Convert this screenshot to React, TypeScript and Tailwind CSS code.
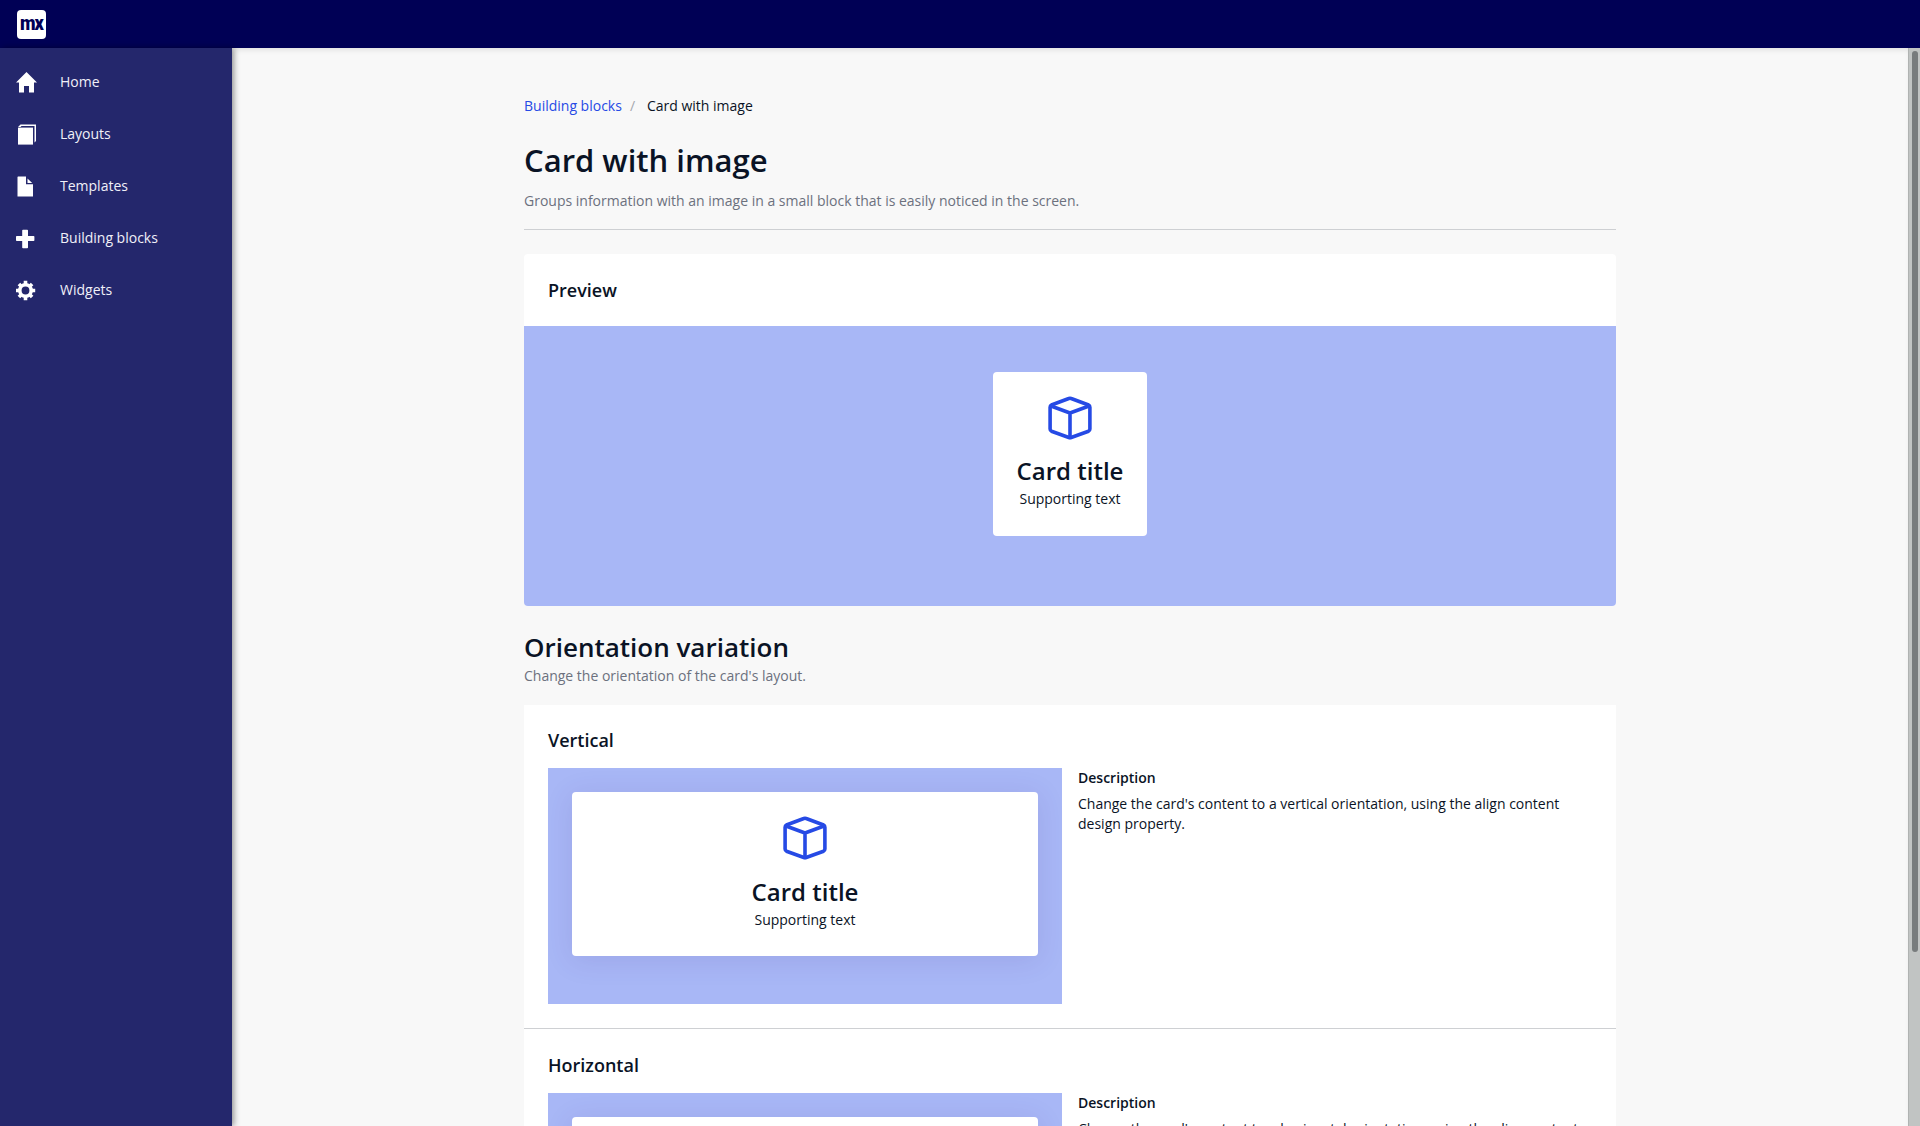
import type { ReactNode } from "react";

const navItems: { label: string; icon: ReactNode }[] = [
  {
    label: "Home",
    icon: (
      <svg viewBox="0 0 21 21" className="h-[21px] w-[21px]" fill="currentColor">
        <path d="M10.5 0 L21 10.4 H18 V20.6 H13 V14 H8 V20.6 H3 V10.4 H0 Z" />
      </svg>
    ),
  },
  {
    label: "Layouts",
    icon: (
      <svg viewBox="0 0 21 21" className="h-[21px] w-[21px]" fill="currentColor">
        <path d="M2 3.6 H17 V20.6 H2 Z" />
        <path d="M2 3 4.5 0.6 H20 V17 L18.5 18.5 V2 H5.5 L4.5 3 Z" />
      </svg>
    ),
  },
  {
    label: "Templates",
    icon: (
      <svg viewBox="0 0 21 21" className="h-[21px] w-[21px]" fill="currentColor">
        <path d="M2 0.5 H10 V8.2 H17 V20.5 H1.500 V1 Z" />
        <path d="M11.5 2.5 V7 H16.2 Z" />
      </svg>
    ),
  },
  {
    label: "Building blocks",
    icon: (
      <svg viewBox="0 0 21 21" className="h-[21px] w-[21px]" fill="currentColor">
        <path d="M7 1.8 h4.2 a.8.8 0 0 1 .8.8 V8 h5.6 a.8.8 0 0 1 .8.8 v3.4 a.8.8 0 0 1-.8.8 H12 v6.4 a.8.8 0 0 1-.8.8 H7 a.8.8 0 0 1-.8-.8 V13 H.8 a.8.8 0 0 1-.8-.8 V8.8 A.8.8 0 0 1 .8 8 H6.2 V2.6 a.8.8 0 0 1 .8-.8Z" />
      </svg>
    ),
  },
  {
    label: "Widgets",
    icon: (
      <svg viewBox="0 0 21 21" className="h-[21px] w-[21px]" fill="none" stroke="currentColor" strokeWidth="3.6">
        <circle cx="9.500" cy="10.500" r="5.700" />
        <path d="M9.500 0.800 V5 M9.500 16 V20.200 M-0.200 10.500 H4 M15 10.500 H19.200 M2.900 3.900 5.700 6.700 M13.300 14.300 16.100 17.100 M16.100 3.900 13.300 6.700 M5.700 14.300 2.900 17.100" />
      </svg>
    ),
  },
];

function DemoCard({ className = "", textClassName = "" }: { className?: string; textClassName?: string }) {
  return (
    <div className={`flex h-[164px] flex-col items-center rounded bg-white p-6 ${className}`}>
      <svg
        viewBox="0 0 48 48"
        className="-mt-0.5 h-12 w-12 shrink-0 text-[#264ae5]"
        fill="none"
        stroke="currentColor"
        strokeWidth="3.6"
        strokeLinejoin="round"
        strokeLinecap="round"
      >
        <path d="M22.800 4.500 Q24 4 25.200 4.500 L42.600 11 Q43.900 11.700 43.900 13.200 V35 Q43.900 36.500 42.500 37.200 L25.200 43.500 Q24 44 22.800 43.500 L5.500 37.200 Q4.100 36.500 4.100 35 V13.200 Q4.100 11.700 5.400 11 Z" />
        <path d="M5 12 24 19 43 12 M24 19 V43.500" />
      </svg>
      <div className={`flex flex-col items-center ${textClassName}`}>
        <div className="text-2xl leading-[31px] font-semibold">Card title</div>
        <div className="mt-[3px] text-sm leading-5">Supporting text</div>
      </div>
    </div>
  );
}

function Variation({ title, text, className }: { title: string; text: string; className: string }) {
  return (
    <section className={`border-b border-[#ced0d3] px-6 pb-6 ${className}`}>
      <h3 className="text-lg leading-[23px] font-semibold">{title}</h3>
      <div className="mt-4 flex gap-4">
        <div className="h-[236px] w-[514px] bg-[#a8b7f6] p-6">
          <DemoCard className="shadow-[0_4px_28px_1px_rgba(60,40,130,0.11)]" textClassName="mt-3.5" />
        </div>
        <div className="w-[514px] text-sm leading-5">
          <div className="pt-px leading-[18px] font-semibold">Description</div>
          <p className="mt-[7px]">{text}</p>
        </div>
      </div>
    </section>
  );
}

export default function App() {
  return (
    <div className="flex h-[1126px] w-[1920px] flex-col overflow-hidden bg-[#f8f8f8] font-['Open_Sans',sans-serif] text-[#0a1325]">
      <header className="flex h-12 shrink-0 items-center bg-[#000055] pl-[17px]">
        <div className="flex h-[29px] w-[29px] items-center justify-center rounded bg-white">
          <span className="-mt-0.5 scale-x-[0.86] font-['Roboto',sans-serif] text-[21px] leading-6 font-black tracking-[-1px] text-[#000055]">
            mx
          </span>
        </div>
      </header>
      <div className="flex min-h-0 flex-1">
        <nav className="z-10 flex w-[232px] shrink-0 flex-col bg-[#24276c] pt-2 text-sm text-[#f0f0f8] shadow-[2px_0_6px_rgba(0,0,0,0.4)]">
          {navItems.map((item) => (
            <a key={item.label} className="flex h-[52px] items-center pl-4">
              <span className="w-11 text-white">{item.icon}</span>
              {item.label}
            </a>
          ))}
        </nav>
        <main className="flex min-w-0 flex-1 overflow-hidden pl-[292px] shadow-[inset_0_4px_6px_-3px_rgba(0,0,0,0.12)]">
          <div className="w-[1092px] shrink-0 pt-12">
            <div className="flex text-sm leading-5">
              <a className="text-[#264ae5]">Building blocks</a>
              <span className="ml-2 w-[17px] text-[#a5a7ae]">/</span>
              <span>Card with image</span>
            </div>
            <h1 className="mt-6 text-[31px] leading-[40px] font-semibold">Card with image</h1>
            <p className="mt-[11px] text-sm leading-5 text-[#6c717e]">
              Groups information with an image in a small block that is easily noticed in the screen.
            </p>
            <hr className="mt-[18px] border-[#ced0d3]" />
            <section className="mt-6 h-[352px] overflow-hidden rounded bg-white">
              <h3 className="h-[72px] px-6 pt-6 text-lg leading-[24px] font-semibold">Preview</h3>
              <div className="flex h-[280px] justify-center bg-[#a8b7f6] pt-[46px]">
                <DemoCard textClassName="mt-[13px]" />
              </div>
            </section>
            <h2 className="mt-6 mb-0.5 text-[26px] leading-[34px] font-semibold">Orientation variation</h2>
            <p className="text-sm leading-5 text-[#6c717e]">Change the orientation of the card's layout.</p>
            <div className="mt-[19px] bg-white">
              <Variation
                className="pt-6"
                title="Vertical"
                text="Change the card's content to a vertical orientation, using the align content design property."
              />
              <Variation
                className="pt-[25px]"
                title="Horizontal"
                text="Change the card's content to a horizontal orientation, using the align content design property."
              />
            </div>
          </div>
        </main>
        <div className="flex w-3 shrink-0 justify-center border-l border-[#b0b3b2] bg-[#c1c4c3] pt-[3px]">
          <div className="h-[901px] w-1.5 rounded-full bg-[#787c7d]" />
        </div>
      </div>
    </div>
  );
}
